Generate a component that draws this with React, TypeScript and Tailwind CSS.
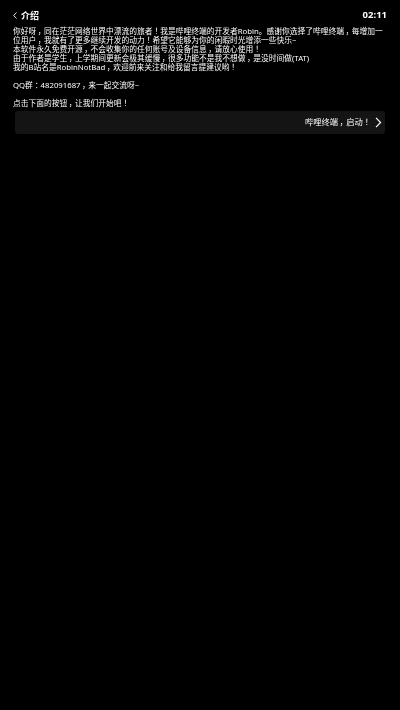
const FONT = "font-['Noto_Sans','Noto_Sans_CJK_SC',sans-serif]";

// fullwidth punctuation sits in the middle of its cell in the reference
const Line = ({ text }: { text: string }) => (
  <p className="whitespace-nowrap">
    {text.split(/([，！：])/).map((part, i) =>
      i % 2 === 1 ? (
        <span key={i} className="inline-block w-[1em] text-center [font-feature-settings:'palt']">{part}</span>
      ) : (
        <span key={i}>{part}</span>
      )
    )}
  </p>
);

export default function App() {
  return (
    <div className={`w-[400px] h-[710px] bg-black text-white flex flex-col ${FONT}`}>
      {/* Header */}
      <div className="flex items-center justify-between pl-[13px] pr-[13px] pt-[7px] h-[23px] will-change-transform">
        <div className="flex items-center gap-[4px]">
          <svg className="w-[4px] h-[7px]" viewBox="0 0 4 7" fill="none" stroke="currentColor" strokeWidth="0.9">
            <path d="M3.5 .5.7 3.5l2.8 3" />
          </svg>
          <span className="text-[9px] font-bold leading-none">介绍</span>
        </div>
        <span className="text-[9.5px] font-bold leading-none">02:11</span>
      </div>

      {/* Intro */}
      <div className="px-[13px] pt-[4px] text-[7.75px] leading-[9px] text-white will-change-transform">
        <Line text="你好呀，同在茫茫网络世界中漂流的旅者！我是哔哩终端的开发者Robin。感谢你选择了哔哩终端，每增加一" />
        <Line text="位用户，我就有了更多继续开发的动力！希望它能够为你的闲暇时光增添一些快乐~" />
        <Line text="本软件永久免费开源，不会收集你的任何账号及设备信息，请放心使用！" />
        <Line text="由于作者是学生，上学期间更新会极其缓慢，很多功能不是我不想做，是没时间做(TAT)" />
        <Line text="我的B站名是RobinNotBad，欢迎前来关注和给我留言提建议哟！" />
        <div className="mt-[9px]">
          <Line text="QQ群：482091687，来一起交流呀~" />
        </div>
        <div className="mt-[9px]">
          <Line text="点击下面的按钮，让我们开始吧！" />
        </div>
      </div>

      {/* Start button */}
      <div className="mx-[15px] mt-[3px] h-[23px] rounded-[3px] bg-[#141414] flex items-center justify-end gap-[4px] pr-[3px]">
        <span className="text-[8.25px] leading-none text-white will-change-transform">
          <Line text="哔哩终端，启动！" />
        </span>
        <svg className="w-[7px] h-[11px]" viewBox="0 0 7 11" fill="none" stroke="currentColor" strokeWidth="1.2">
          <path d="M1 .8 5.6 5.5 1 10.2" />
        </svg>
      </div>
    </div>
  );
}
